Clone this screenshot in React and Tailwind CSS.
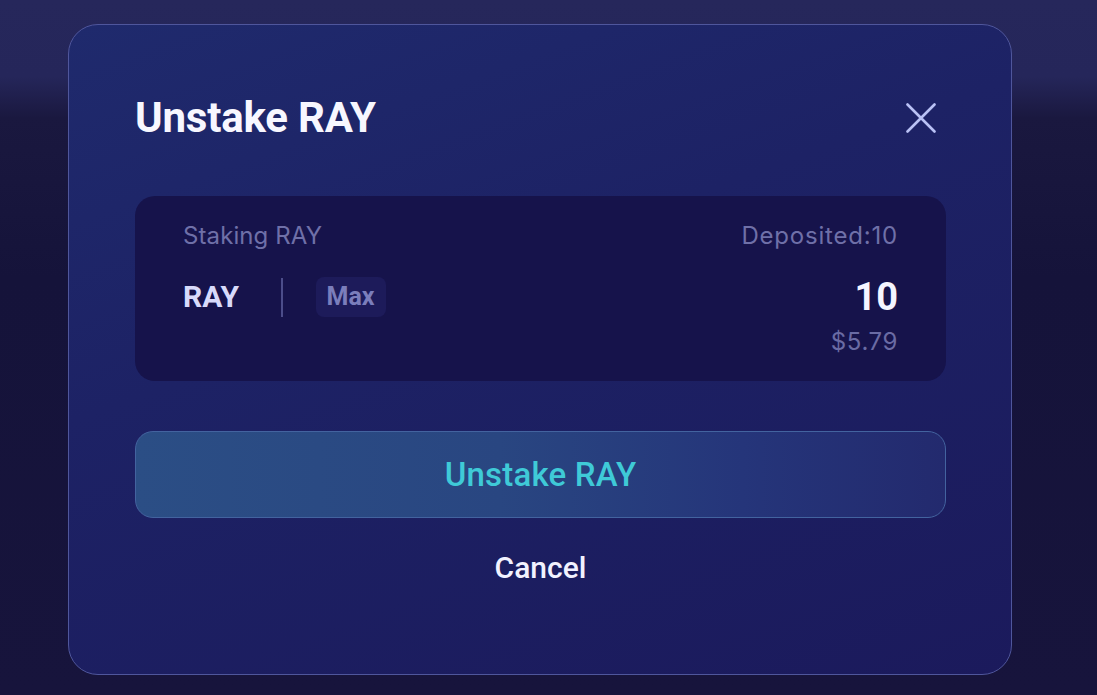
import { useState } from 'react';

const sans = { fontFamily: 'Inter, "Liberation Sans", sans-serif' };

function CloseIcon() {
  return (
    <svg width="30" height="30" viewBox="0 0 30 30" fill="none" className="mr-[10px]">
      <path d="M1.5 1.5 L28.5 28.5 M28.5 1.5 L1.5 28.5" stroke="#b9c1f5" strokeWidth="2.6" strokeLinecap="round" />
    </svg>
  );
}

export default function App() {
  const [amount] = useState('10');

  return (
    <div className="w-[1097px] h-[695px] overflow-hidden bg-[linear-gradient(to_bottom,#26275b_0%,#25265a_11%,#1a183f_17%,#15133a_40%,#17143c_100%)] pl-[68px] pt-[24px] font-['Roboto',sans-serif]">
      <div className="w-[944px] h-[651px] rounded-[30px] border-[1.5px] border-[#4f569c] bg-[linear-gradient(160deg,#1f2a6d_0%,#1d2265_40%,#1b1a5c_100%)] pt-[72px] pl-[66px] pr-[65px]">
        <div className="flex items-center justify-between h-[42px]">
          <h1 className="text-[42px] leading-none font-bold text-[#f7f7ff] tracking-[-0.2px]">Unstake RAY</h1>
          <CloseIcon />
        </div>

        <div className="mt-[57px] h-[185px] rounded-[20px] bg-[#16134b] px-12 pt-[28px] flex justify-between" style={sans}>
          <div>
            <div className="text-[24px] leading-6 tracking-[0.1px] text-[#6f70a8]">Staking RAY</div>
            <div className="mt-[29px] h-[40px] flex items-center">
              <span className="text-[30px] leading-none font-bold text-[#d8dafb] font-['Roboto',sans-serif]">RAY</span>
              <span className="ml-[42px] w-[1.5px] h-[39px] bg-[#4c4d8a]" />
              <span className="ml-[33px] h-[40px] px-[11px] rounded-[8px] bg-[#1d1b5a] flex items-center text-[25px] font-bold text-[#7b7ebb] font-['Roboto',sans-serif]">Max</span>
            </div>
          </div>
          <div className="flex flex-col items-end">
            <div className="text-[24px] leading-6 tracking-[0.8px] text-[#6f70a8]">Deposited:10</div>
            <div className="mt-[29px] h-[40px] flex items-center text-[38px] font-bold text-[#f5f5ff] font-['Roboto',sans-serif]">{amount}</div>
            <div className="mt-[13px] text-[24px] leading-6 tracking-[0.6px] text-[#6a6ba4]">$5.79</div>
          </div>
        </div>

        <button className="mt-[50px] w-full h-[87px] rounded-[18px] border-[1.5px] border-[#43639f] bg-[linear-gradient(90deg,#2b4e85_0%,#294681_45%,#25357a_75%,#232a6e_100%)] text-[33px] font-medium text-[#3fcad7] tracking-[0.2px]">
          Unstake RAY
        </button>

        <div className="mt-[35px] text-center text-[30px] leading-none font-medium text-[#f2f2ff]">Cancel</div>
      </div>
    </div>
  );
}
